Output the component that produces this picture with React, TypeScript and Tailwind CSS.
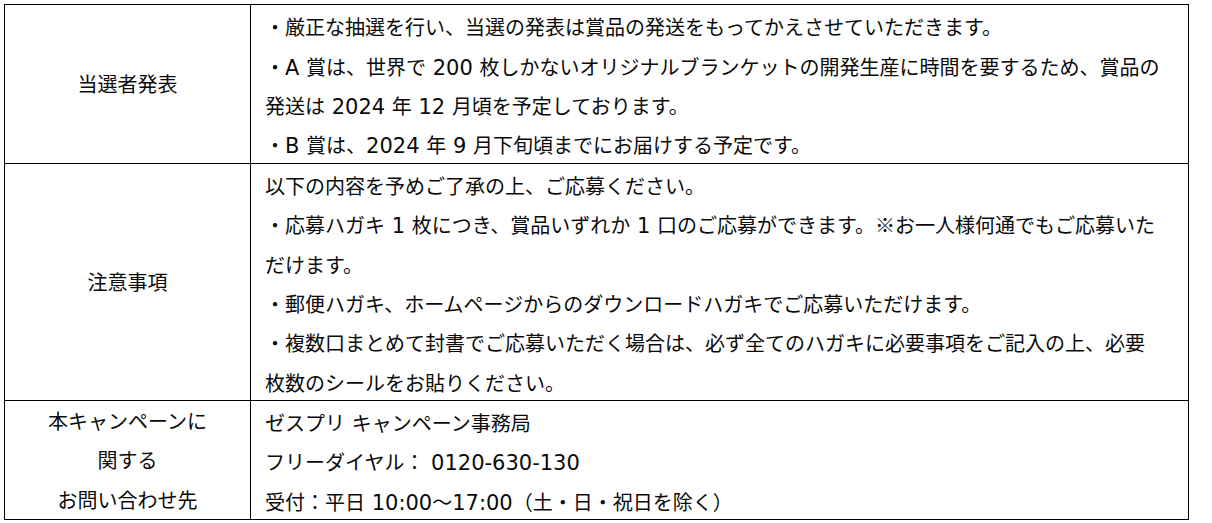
import React from "react";

const rows = [
  {
    label: ["当選者発表"],
    height: "h-[159px]",
    lines: [
      "・厳正な抽選を行い、当選の発表は賞品の発送をもってかえさせていただきます。",
      "・A 賞は、世界で 200 枚しかないオリジナルブランケットの開発生産に時間を要するため、賞品の",
      "発送は 2024 年 12 月頃を予定しております。",
      "・B 賞は、2024 年 9 月下旬頃までにお届けする予定です。",
    ],
  },
  {
    label: ["注意事項"],
    height: "h-[237px]",
    lines: [
      "以下の内容を予めご了承の上、ご応募ください。",
      "・応募ハガキ 1 枚につき、賞品いずれか 1 口のご応募ができます。※お一人様何通でもご応募いた",
      "だけます。",
      "・郵便ハガキ、ホームページからのダウンロードハガキでご応募いただけます。",
      "・複数口まとめて封書でご応募いただく場合は、必ず全てのハガキに必要事項をご記入の上、必要",
      "枚数のシールをお貼りください。",
    ],
  },
  {
    label: ["本キャンペーンに", "関する", "お問い合わせ先"],
    height: "h-[119px]",
    lines: [
      "ゼスプリ キャンペーン事務局",
      "フリーダイヤル： 0120-630-130",
      "受付：平日 10:00～17:00（土・日・祝日を除く）",
    ],
  },
];

// latin runs (digits, letters, spaces) get a wider face, like the original's
function Line({ text }: { text: string }) {
  const parts = text.split(/([A-Za-z0-9:\- ]+)/).filter(Boolean);
  return (
    <div className="h-[39.3px] pt-[4px] leading-[35.3px] whitespace-nowrap overflow-visible">
      {parts.map((p, i) =>
        /^[A-Za-z0-9:\- ]+$/.test(p) ? (
          <span key={i} className="font-['DejaVu_Sans',sans-serif] text-[21px] leading-none">
            {p}
          </span>
        ) : (
          <span key={i}>{p}</span>
        )
      )}
    </div>
  );
}

export default function App() {
  return (
    <div className="w-[1212px] h-[523px] bg-white pt-[4px] pl-[4px] font-['Noto_Sans_CJK_JP',sans-serif] text-[20px] text-[#0a0a0a]">
      <table className="border-collapse w-[1184px] table-fixed">
        <colgroup>
          <col className="w-[246px]" />
          <col className="w-[938px]" />
        </colgroup>
        <tbody>
          {rows.map((r, i) => (
            <tr key={i} className={r.height}>
              <td className="border border-black text-center align-middle p-0">
                {r.label.map((l) => (
                  <div key={l} className="h-[39.3px] leading-[39.3px]">
                    {l}
                  </div>
                ))}
              </td>
              <td className="border border-black align-middle pl-[14px] pr-0 py-0">
                {r.lines.map((l) => (
                  <Line key={l} text={l} />
                ))}
              </td>
            </tr>
          ))}
        </tbody>
      </table>
    </div>
  );
}
